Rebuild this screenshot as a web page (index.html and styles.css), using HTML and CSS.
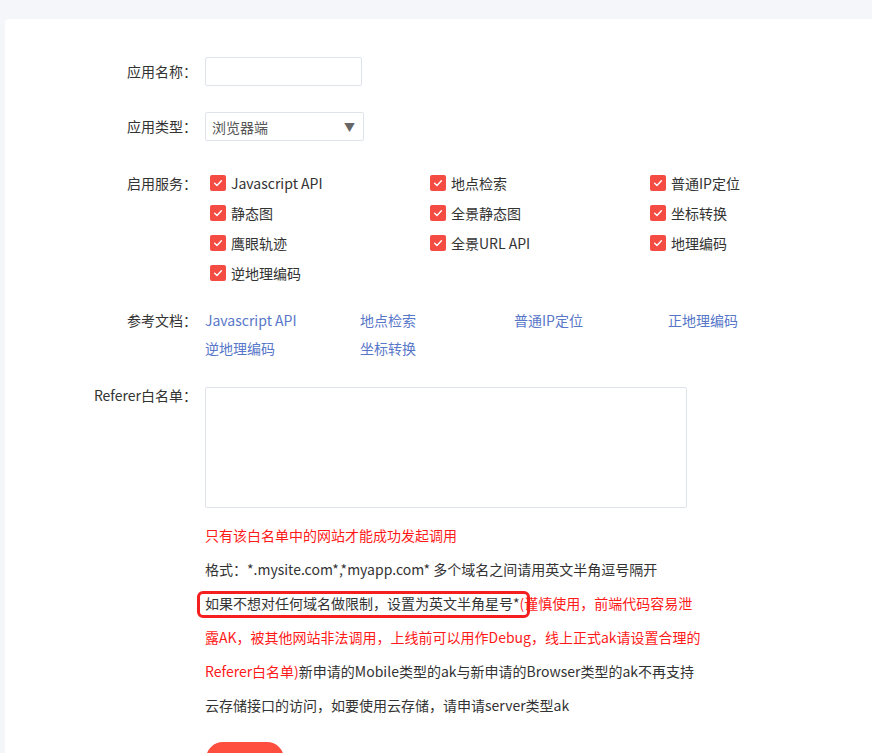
FILE: index.html
```html
<!DOCTYPE html>
<html lang="zh-CN">
<head>
<meta charset="utf-8">
<title>创建应用</title>
<link rel="stylesheet" href="styles.css">
</head>
<body>
<div class="card">
  <div class="row row-name">
    <div class="label">应用名称：</div>
    <div class="field"><input class="text-input" type="text"></div>
  </div>
  <div class="row row-type">
    <div class="label">应用类型：</div>
    <div class="field">
      <div class="select"><span class="select-text">浏览器端</span><span class="select-arrow">▼</span></div>
    </div>
  </div>
  <div class="row row-services">
    <div class="label">启用服务：</div>
    <div class="field checks">
      <div class="check"><span class="box"><svg viewBox="0 0 16 16" width="16" height="16"><path d="M4.6 8.2 L7 10.4 L11.4 5.8" fill="none" stroke="#fff" stroke-width="1.4" stroke-linecap="round" stroke-linejoin="round"/></svg></span>Javascript API</div>
      <div class="check"><span class="box"><svg viewBox="0 0 16 16" width="16" height="16"><path d="M4.6 8.2 L7 10.4 L11.4 5.8" fill="none" stroke="#fff" stroke-width="1.4" stroke-linecap="round" stroke-linejoin="round"/></svg></span>地点检索</div>
      <div class="check"><span class="box"><svg viewBox="0 0 16 16" width="16" height="16"><path d="M4.6 8.2 L7 10.4 L11.4 5.8" fill="none" stroke="#fff" stroke-width="1.4" stroke-linecap="round" stroke-linejoin="round"/></svg></span>普通IP定位</div>
      <div class="check"><span class="box"><svg viewBox="0 0 16 16" width="16" height="16"><path d="M4.6 8.2 L7 10.4 L11.4 5.8" fill="none" stroke="#fff" stroke-width="1.4" stroke-linecap="round" stroke-linejoin="round"/></svg></span>静态图</div>
      <div class="check"><span class="box"><svg viewBox="0 0 16 16" width="16" height="16"><path d="M4.6 8.2 L7 10.4 L11.4 5.8" fill="none" stroke="#fff" stroke-width="1.4" stroke-linecap="round" stroke-linejoin="round"/></svg></span>全景静态图</div>
      <div class="check"><span class="box"><svg viewBox="0 0 16 16" width="16" height="16"><path d="M4.6 8.2 L7 10.4 L11.4 5.8" fill="none" stroke="#fff" stroke-width="1.4" stroke-linecap="round" stroke-linejoin="round"/></svg></span>坐标转换</div>
      <div class="check"><span class="box"><svg viewBox="0 0 16 16" width="16" height="16"><path d="M4.6 8.2 L7 10.4 L11.4 5.8" fill="none" stroke="#fff" stroke-width="1.4" stroke-linecap="round" stroke-linejoin="round"/></svg></span>鹰眼轨迹</div>
      <div class="check"><span class="box"><svg viewBox="0 0 16 16" width="16" height="16"><path d="M4.6 8.2 L7 10.4 L11.4 5.8" fill="none" stroke="#fff" stroke-width="1.4" stroke-linecap="round" stroke-linejoin="round"/></svg></span>全景URL API</div>
      <div class="check"><span class="box"><svg viewBox="0 0 16 16" width="16" height="16"><path d="M4.6 8.2 L7 10.4 L11.4 5.8" fill="none" stroke="#fff" stroke-width="1.4" stroke-linecap="round" stroke-linejoin="round"/></svg></span>地理编码</div>
      <div class="check"><span class="box"><svg viewBox="0 0 16 16" width="16" height="16"><path d="M4.6 8.2 L7 10.4 L11.4 5.8" fill="none" stroke="#fff" stroke-width="1.4" stroke-linecap="round" stroke-linejoin="round"/></svg></span>逆地理编码</div>
    </div>
  </div>
  <div class="row row-docs">
    <div class="label">参考文档：</div>
    <div class="field docs">
      <a class="doc">Javascript API</a>
      <a class="doc">地点检索</a>
      <a class="doc">普通IP定位</a>
      <a class="doc">正地理编码</a>
      <a class="doc">逆地理编码</a>
      <a class="doc">坐标转换</a>
    </div>
  </div>
  <div class="row row-referer">
    <div class="label label-top">Referer白名单：</div>
    <div class="field"><textarea class="textarea"></textarea></div>
  </div>
  <div class="notes">
    <div class="note red">只有该白名单中的网站才能成功发起调用</div>
    <div class="note">格式：*.mysite.com*,*myapp.com* 多个域名之间请用英文半角逗号隔开</div>
    <div class="note">如果不想对任何域名做限制，设置为英文半角星号*<span class="red">(谨慎使用，前端代码容易泄</span></div>
    <div class="note red">露AK，被其他网站非法调用，上线前可以用作Debug，线上正式ak请设置合理的</div>
    <div class="note"><span class="red">Referer白名单)</span>新申请的Mobile类型的ak与新申请的Browser类型的ak不再支持</div>
    <div class="note">云存储接口的访问，如要使用云存储，请申请server类型ak</div>
    <div class="highlight"></div>
  </div>
  <div class="actions"><button class="btn" aria-label="提交"></button></div>
</div>
</body>
</html>
```
FILE: styles.css
```css
html, body {
  margin: 0;
  padding: 0;
}
body {
  background: #f5f6fa;
  font-family: "Noto Sans CJK SC", "Noto Sans", sans-serif;
  font-size: 14px;
  color: #333;
  overflow: hidden;
  height: 753px;
}
.card {
  margin: 19px 0 0 5px;
  background: #fff;
  border-radius: 4px 0 0 0;
  padding-top: 38px;
  min-height: 760px;
}
.row {
  display: flex;
  align-items: flex-start;
}
.label {
  width: 200px;
  box-sizing: border-box;
  padding-right: 8px;
  text-align: right;
  flex: none;
  color: #333;
  white-space: nowrap;
}
.field {
  flex: none;
}
.row-name .label { line-height: 29px; }
.text-input {
  display: block;
  width: 157px;
  height: 29px;
  box-sizing: border-box;
  border: 1px solid #dfe3ea;
  border-radius: 2px;
  margin: 0;
  padding: 0 8px;
  outline: none;
}
.row-type { margin-top: 26px; }
.row-type .label { line-height: 29px; }
.select {
  width: 159px;
  height: 29px;
  box-sizing: border-box;
  border: 1px solid #dfe3ea;
  border-radius: 2px;
  display: flex;
  align-items: center;
  justify-content: space-between;
  padding: 0 8px 0 6px;
}
.select-text { color: #555; }
.select-arrow { color: #666; font-size: 11px; }
.row-services { margin-top: 27px; }
.row-services .label { line-height: 30px; }
.checks {
  display: grid;
  grid-template-columns: 220px 220px 220px;
}
.check {
  display: flex;
  align-items: center;
  height: 30px;
  padding-left: 5px;
  white-space: nowrap;
  color: #333;
}
.box {
  width: 16px;
  height: 16px;
  border-radius: 2px;
  background: #f44c42;
  margin-right: 5px;
  display: flex;
  flex: none;
}
.row-docs { margin-top: 18px; }
.row-docs .label { line-height: 28px; }
.docs {
  display: grid;
  grid-template-columns: 155px 154px 154px 154px;
}
.doc {
  line-height: 28px;
  color: #5877c9;
  text-decoration: none;
  white-space: nowrap;
}
.row-referer { margin-top: 25px; }
.label-top { line-height: 16px; }
.textarea {
  display: block;
  width: 482px;
  height: 121px;
  box-sizing: border-box;
  border: 1px solid #dfe3ea;
  border-radius: 2px;
  margin: 0;
  resize: none;
  outline: none;
}
.notes {
  position: relative;
  margin-top: 10px;
  padding-left: 200px;
}
.note {
  line-height: 34px;
  white-space: nowrap;
  color: #333;
}
.red { color: #ff1a1a; }
.highlight {
  position: absolute;
  left: 192px;
  top: 73px;
  width: 333px;
  height: 27px;
  box-sizing: border-box;
  border: 3px solid #f51f1f;
  border-radius: 6px;
}
.actions {
  margin-top: 20px;
  padding-left: 201px;
}
.btn {
  display: block;
  width: 78px;
  height: 34px;
  border: none;
  border-radius: 17px;
  background: #fe4e3e;
  padding: 0;
}
```
